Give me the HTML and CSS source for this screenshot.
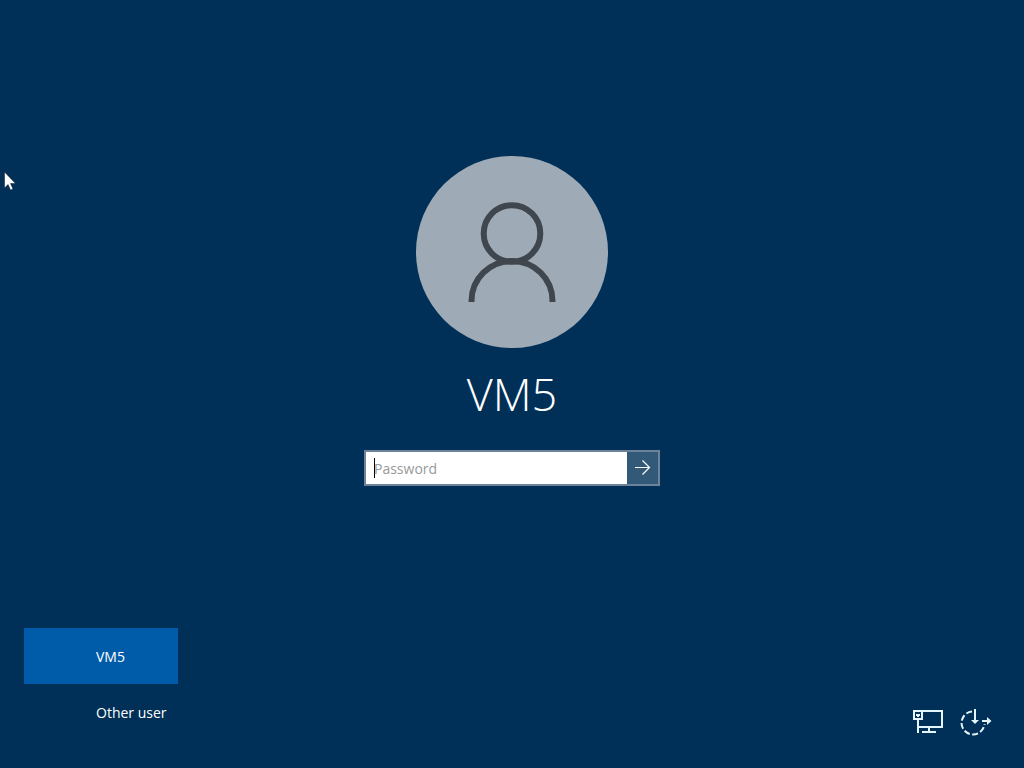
FILE: index.html
```
<!DOCTYPE html>
<html lang="en">
<head>
    <meta charset="UTF-8">
    <meta name="viewport" content="width=device-width, initial-scale=1.0">
    <title>Sign in</title>
    <link rel="stylesheet" href="styles.css">
</head>
<body>
    <main class="login">
        <div class="avatar">
            <svg viewBox="0 0 192 192" fill="none" stroke="#3f464d" stroke-width="6" aria-hidden="true">
                <circle cx="96" cy="77.500" r="28.300"/>
                <path d="M55.500 146V145a40.500 40 0 0 1 81 0V146"/>
            </svg>
        </div>
        <h1 class="user-name">VM5</h1>
        <form class="password-form" onsubmit="return false">
            <div class="field">
                <input type="password" id="password" placeholder="Password" aria-label="Password">
                <span class="caret"></span>
            </div>
            <button type="submit" class="submit" aria-label="Submit">
                <svg width="16" height="16" viewBox="0 0 16 16" fill="none" stroke="#fff" stroke-width="1.200" aria-hidden="true">
                    <path d="M0 7.500H14.500M7.500 0.500L14.500 7.500L7.500 14.500"/>
                </svg>
            </button>
        </form>
    </main>

    <footer class="bottom-bar">
        <div class="accounts">
            <button type="button" class="account selected">VM5</button>
            <button type="button" class="account">Other user</button>
        </div>
        <div class="tools">
            <button type="button" class="tool" aria-label="Network">
                <svg width="32" height="32" viewBox="0 0 32 32" fill="none" stroke="#e4f5fc" stroke-width="2" aria-hidden="true">
                    <path d="M10 7H30V23H6M17 23V28M10 28H24M6 16V29"/>
                    <path d="M2 7H10V15H2ZM4 11H8M6 10V13"/>
                </svg>
            </button>
            <button type="button" class="tool" aria-label="Ease of access">
                <svg width="32" height="32" viewBox="0 0 32 32" fill="none" stroke="#e4f5fc" stroke-width="2" aria-hidden="true">
                    <path d="M12 7.500A11.500 11.500 0 1 0 24.500 20" stroke-dasharray="6 2.500"/>
                    <path d="M15 5V17M22 17H28"/>
                    <path d="M11 16H19L15 20ZM27 13L31.500 17L27 21Z" fill="#e4f5fc" stroke="none"/>
                </svg>
            </button>
        </div>
    </footer>

    <svg class="cursor" width="12" height="20" viewBox="0 0 12 20" aria-hidden="true">
        <path d="M0.500 1V17L4 13.500L6.500 19L9 18L6.500 12.500H11.500Z" fill="#fff" stroke="#001a30" stroke-width="0.500"/>
    </svg>
</body>
</html>
```
FILE: styles.css
```
* {
    box-sizing: border-box;
}
body {
    margin: 0;
    min-height: 100vh;
    display: flex;
    flex-direction: column;
    background-color: #003057;
    color: #fff;
    font-family: 'Segoe UI', 'Open Sans', 'Noto Sans', sans-serif;
    font-size: 14px;
}
button, input {
    font: inherit;
    color: inherit;
    border: none;
    margin: 0;
    padding: 0;
}
svg {
    display: block;
}
.login {
    flex: 1;
    display: flex;
    flex-direction: column;
    align-items: center;
    justify-content: center;
    padding: 14px 16px 0;
}
.avatar {
    width: 192px;
    height: 192px;
    border-radius: 50%;
    background-color: #9eabb6;
}
.user-name {
    margin: 16px 0 26px;
    font-size: 45px;
    line-height: 60px;
    font-weight: 300;
}
.password-form {
    display: flex;
    width: 100%;
    max-width: 296px;
    height: 36px;
    border: 2px solid #6c839a;
}
.field {
    position: relative;
    flex: 1;
    display: flex;
}
.field input {
    width: 100%;
    padding: 0 8px;
    background-color: #fff;
    color: #000;
    outline: none;
}
.field input::placeholder {
    color: #999;
    opacity: 1;
}
.caret {
    position: absolute;
    left: 8px;
    top: 6px;
    width: 1px;
    height: 20px;
    background-color: #000;
}
.submit {
    width: 31px;
    display: flex;
    align-items: center;
    justify-content: center;
    background-color: #335979;
    cursor: pointer;
}
.bottom-bar {
    display: flex;
    justify-content: space-between;
    align-items: flex-end;
    padding: 0 32px 28px 24px;
}
.accounts {
    display: flex;
    flex-direction: column;
}
.account {
    width: 154px;
    height: 56px;
    padding-left: 72px;
    background: none;
    text-align: left;
    cursor: pointer;
}
.account.selected {
    background-color: #005ca8;
}
.tools {
    display: flex;
    gap: 16px;
    padding-bottom: 4px;
}
.tool {
    background: none;
    cursor: pointer;
}
.cursor {
    position: absolute;
    left: 4px;
    top: 171px;
}
```
